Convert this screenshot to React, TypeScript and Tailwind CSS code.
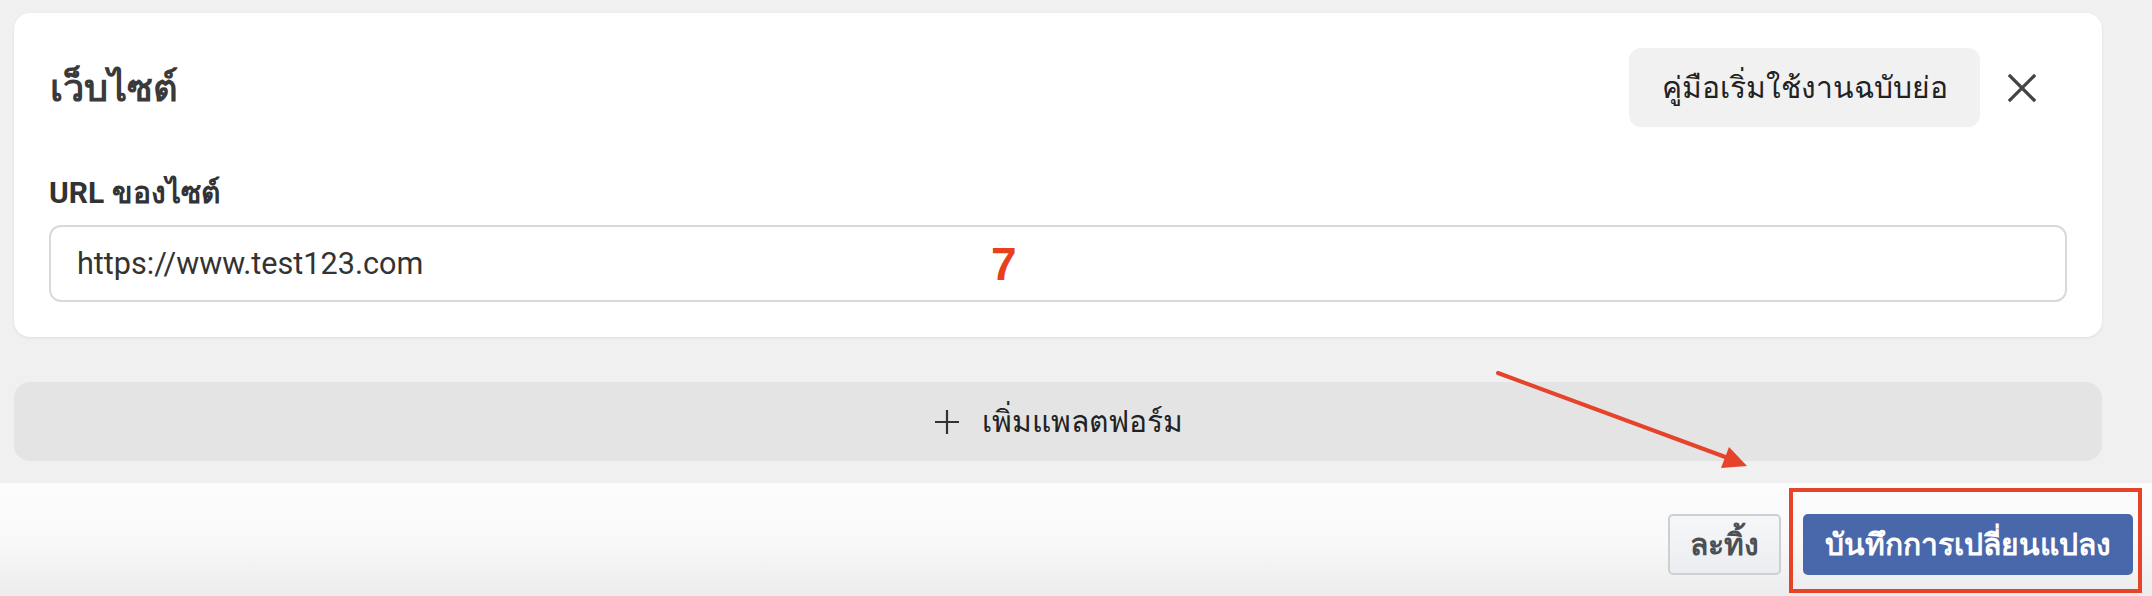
import React from 'react';

// Close (X) glyph used in the card header
const CloseIcon: React.FC = () => (
  <svg width="30" height="30" viewBox="0 0 30 30" fill="none" stroke="#444" strokeWidth="3.2" strokeLinecap="square">
    <path d="M3 3 L27 27 M27 3 L3 27" />
  </svg>
);

const PlusIcon: React.FC = () => (
  <svg width="26" height="26" viewBox="0 0 26 26" fill="none" stroke="#333" strokeWidth="2.2">
    <path d="M13 1 V25 M1 13 H25" />
  </svg>
);

/**
 * Site settings panel with an "add platform" bar and a save footer.
 * The red number, arrow and box are annotation marks drawn over the page.
 */
const App: React.FC = () => {
  return (
    <div className="relative w-full h-[596px] overflow-hidden bg-[#f0f0f0] flex flex-col font-['Roboto','Noto_Sans',sans-serif]">
      <div className="pl-[14px] pr-[50px] pt-[13px] flex flex-col">
        {/* Website card */}
        <div className="bg-white rounded-[16px] shadow-[0_1px_3px_rgba(0,0,0,0.08)] px-[35px] pt-[35px] pb-[35px]">
          <div className="flex items-center justify-between h-[79px]">
            <h2 className="text-[38px] font-bold text-[#3a3a3a] leading-none pl-px">เว็บไซต์</h2>
            <div className="flex items-center gap-[27px]">
              <button className="h-[79px] w-[351px] rounded-[12px] bg-[#f1f1f1] text-[30px] text-[#222] flex items-center justify-center">
                คู่มือเริ่มใช้งานฉบับย่อ
              </button>
              <button className="w-[30px] h-[30px] flex items-center justify-center mr-[30px]">
                <CloseIcon />
              </button>
            </div>
          </div>

          <label className="block mt-[46px] text-[30px] leading-[40px] font-bold text-[#333]">URL ของไซต์</label>
          <input
            readOnly
            defaultValue="https://www.test123.com"
            className="mt-[12px] w-full h-[77px] rounded-[12px] border-2 border-[#d9d9d9] px-[26px] text-[30.6px] text-[#333] outline-none"
          />
        </div>

        {/* Add platform bar */}
        <button className="mt-[45px] h-[79px] rounded-[16px] bg-[#e4e4e4] flex items-center justify-center gap-[22px] text-[30px] text-[#222]">
          <PlusIcon />
          <span>เพิ่มแพลตฟอร์ม</span>
        </button>
      </div>

      {/* Footer */}
      <div className="mt-auto h-[113px] bg-gradient-to-b from-[#fcfcfc] via-[#f9f9f9] to-[#ececec] flex items-start justify-end gap-[22px] pt-[31px] pr-[19px] font-['Liberation_Sans',sans-serif]">
        <button className="h-[61px] w-[113px] rounded-[5px] border-2 border-[#ccd0d5] bg-gradient-to-b from-[#f6f7f9] to-[#ebedf0] text-[30px] font-bold text-[#4b4f56]">
          ละทิ้ง
        </button>
        <button className="h-[61px] w-[330px] rounded-[5px] bg-[#4967ab] text-[30px] font-bold text-white">
          บันทึกการเปลี่ยนแปลง
        </button>
      </div>

      {/* Annotation marks */}
      <span className="absolute left-[991px] top-[241px] text-[46px] leading-none font-bold text-[#e8401c] font-['Liberation_Sans',sans-serif]">7</span>
      <div className="absolute left-[1789px] top-[488px] w-[353px] h-[105px] border-4 border-[#e5432a]" />
      <svg className="absolute inset-0 pointer-events-none" width="2152" height="596">
        <line x1="1498" y1="373" x2="1728" y2="458" stroke="#e5432a" strokeWidth="4" strokeLinecap="round" />
        <polygon points="1747,466 1721,468 1729,447" fill="#e5432a" />
      </svg>
    </div>
  );
};

export default App;
